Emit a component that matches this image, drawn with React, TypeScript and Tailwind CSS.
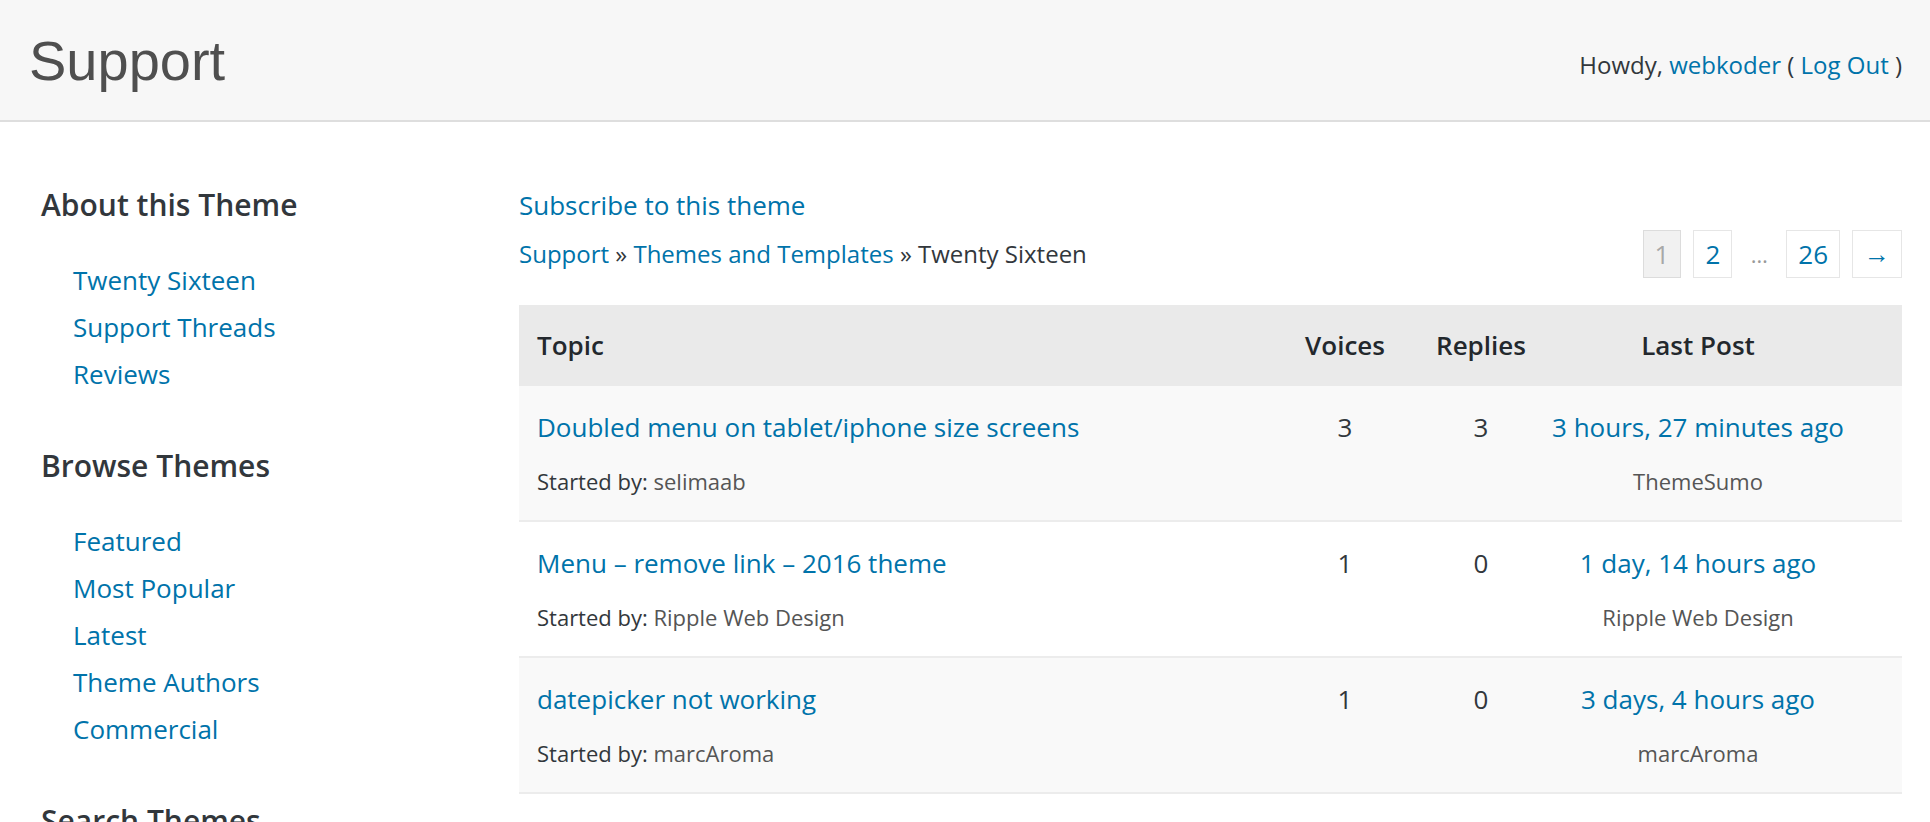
const topics = [
  {
    title: "Doubled menu on tablet/iphone size screens",
    author: "selimaab",
    voices: 3,
    replies: 3,
    last: "3 hours, 27 minutes ago",
    lastBy: "ThemeSumo",
  },
  {
    title: "Menu – remove link – 2016 theme",
    author: "Ripple Web Design",
    voices: 1,
    replies: 0,
    last: "1 day, 14 hours ago",
    lastBy: "Ripple Web Design",
  },
  {
    title: "datepicker not working",
    author: "marcAroma",
    voices: 1,
    replies: 0,
    last: "3 days, 4 hours ago",
    lastBy: "marcAroma",
  },
];

const sidebar = [
  { heading: "About this Theme", links: ["Twenty Sixteen", "Support Threads", "Reviews"] },
  { heading: "Browse Themes", links: ["Featured", "Most Popular", "Latest", "Theme Authors", "Commercial"] },
  { heading: "Search Themes", links: [] },
];

function Header() {
  return (
    <header className="h-[122px] bg-[#f7f7f7] border-b-2 border-[#dedede] flex justify-between items-start pl-[29px] pr-[28px]">
      <h1 className="mt-[33px] text-[56px] leading-[56px] text-[#4f4f4f] font-['Liberation_Sans',Arial,sans-serif]">
        Support
      </h1>
      <div className="mt-[49px] text-[24px] leading-[32px] text-[#32373c]">
        Howdy, <a className="text-[#0073aa]">webkoder</a> ( <a className="text-[#0073aa]">Log Out</a> )
      </div>
    </header>
  );
}

function Sidebar() {
  return (
    <aside className="w-[519px] shrink-0 pl-[41px] pt-[65px]">
      {sidebar.map((s, i) => (
        <div key={s.heading} className={i > 0 ? "mt-[50px]" : ""}>
          <h3 className="text-[30px] leading-[36px] font-semibold text-[#32373c]">{s.heading}</h3>
          {s.links.length > 0 && (
            <ul className="mt-[34px] pl-[32px]">
              {s.links.map((l) => (
                <li key={l} className="text-[26px] leading-[47px] text-[#0073aa]">
                  <a>{l}</a>
                </li>
              ))}
            </ul>
          )}
        </div>
      ))}
    </aside>
  );
}

function Pagination() {
  const box = "h-[48px] px-[11px] flex items-center border border-[#e6e6e6] text-[26px] text-[#0073aa]";
  return (
    <div className="flex items-center gap-3">
      <span className="h-[48px] px-[11px] flex items-center border border-[#dcdcdc] bg-[#f1f1f1] text-[26px] text-[#a8a8a8]">1</span>
      <a className={box}>2</a>
      <span className="w-[30px] text-center text-[22px] text-[#999]">…</span>
      <a className={box}>26</a>
      <a className={box + " font-['Liberation_Sans',sans-serif]"}>→</a>
    </div>
  );
}

function TopicTable() {
  const grid = "grid grid-cols-[1fr_139px_114px_320px] pl-[18px] pr-[44px]";
  return (
    <div className="mt-[27px]">
      <div className={grid + " h-[81px] items-center bg-[#eaeaea] text-[26px] font-semibold text-[#23282d]"}>
        <div>Topic</div>
        <div className="text-center pr-[19px]">Voices</div>
        <div className="text-center">Replies</div>
        <div className="text-center">Last Post</div>
      </div>
      {topics.map((t, i) => (
        <div
          key={t.title}
          className={grid + " pt-[23px] pb-[24px] border-b-2 border-[#ececec] " + (i % 2 === 0 ? "bg-[#f9f9f9]" : "bg-white")}
        >
          <div>
            <a className="block text-[26px] leading-[36px] text-[#0073aa]">{t.title}</a>
            <div className="mt-[21px] text-[22px] leading-[30px] text-[#555]">
              <span className="text-[#32373c]">Started by:</span> {t.author}
            </div>
          </div>
          <div className="text-center pr-[19px] text-[26px] leading-[36px] text-[#32373c]">{t.voices}</div>
          <div className="text-center text-[26px] leading-[36px] text-[#32373c]">{t.replies}</div>
          <div className="text-center whitespace-nowrap">
            <a className="block text-[26px] leading-[36px] text-[#0073aa]">{t.last}</a>
            <div className="mt-[21px] text-[22px] leading-[30px] text-[#555]">{t.lastBy}</div>
          </div>
        </div>
      ))}
    </div>
  );
}

export default function App() {
  return (
    <div className="min-h-screen bg-white font-['Open_Sans',sans-serif] text-[#32373c]">
      <Header />
      <div className="flex">
        <Sidebar />
        <main className="flex-1 pr-[28px] pt-[65px] pb-16">
          <a className="block text-[26px] leading-[36px] text-[#0073aa]">Subscribe to this theme</a>
          <div className="mt-[7px] flex items-center justify-between">
            <div className="text-[24px] leading-[48px]">
              <a className="text-[#0073aa]">Support</a> » <a className="text-[#0073aa]">Themes and Templates</a> » Twenty Sixteen
            </div>
            <Pagination />
          </div>
          <TopicTable />
        </main>
      </div>
    </div>
  );
}
